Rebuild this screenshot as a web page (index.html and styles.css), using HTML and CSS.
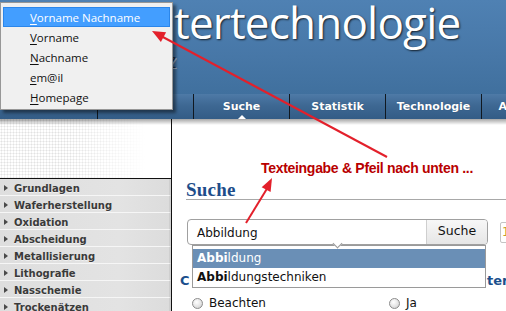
FILE: index.html
```html
<!DOCTYPE html>
<html lang="de">
<head>
<meta charset="utf-8">
<title>Suche</title>
<link rel="stylesheet" href="styles.css">
</head>
<body>
<div class="page">
  <header class="top">
    <h1 class="title">tertechnologie</h1>
    <span class="sub">z</span>
  </header>
  <nav class="nav">
    <div class="cell"></div>
    <div class="cell"></div>
    <div class="cell active">Suche</div>
    <div class="cell">Statistik</div>
    <div class="cell">Technologie</div>
    <div class="cell">Allgemein</div>
  </nav>
  <div class="layout">
    <aside class="side">
      <div class="side-top"></div>
      <ul class="side-menu">
        <li>Grundlagen</li>
        <li>Waferherstellung</li>
        <li>Oxidation</li>
        <li>Abscheidung</li>
        <li>Metallisierung</li>
        <li>Lithografie</li>
        <li>Nasschemie</li>
        <li>Trockenätzen</li>
      </ul>
    </aside>
    <main class="content">
      <h2 class="heading">Suche</h2>
      <div class="search-row">
        <div class="search-box">
          <span class="search-text">Abbildung</span>
          <span class="search-btn">Suche</span>
        </div>
        <div class="page-box">1</div>
      </div>
      <div class="question"><span>C</span><span>ter?</span></div>
      <div class="radios">
        <label class="radio"><span class="dot"></span>Beachten</label>
        <label class="radio"><span class="dot"></span>Ja</label>
      </div>
      <ul class="suggest">
        <li class="sel"><b>Abbi</b>ldung</li>
        <li><b>Abbi</b>ldungstechniken</li>
      </ul>
      <span class="notch"></span>
      <p class="note">Texteingabe &amp; Pfeil nach unten ...</p>
    </main>
  </div>
  <ul class="ctx-menu">
    <li class="hot"><u>V</u>orname Nachname</li>
    <li><u>V</u>orname</li>
    <li><u>N</u>achname</li>
    <li><u>e</u>m@il</li>
    <li><u>H</u>omepage</li>
  </ul>
  <svg class="arrows" width="506" height="311" viewBox="0 0 506 311">
    <line x1="387" y1="157" x2="161" y2="36" stroke="#e3202b" stroke-width="2"/>
    <polygon points="152,31 160.9,42 166.1,32.3" fill="#e3202b"/>
    <line x1="246" y1="223" x2="268" y2="187" stroke="#e3202b" stroke-width="2"/>
    <polygon points="272,178 270.6,191.9 261.7,187.3" fill="#e3202b"/>
  </svg>
</div>
</body>
</html>
```
FILE: styles.css
```css
* { box-sizing: border-box; }
html, body { margin: 0; padding: 0; }
body { width: 506px; height: 311px; overflow: hidden; background: #fff; font-family: "DejaVu Sans", Verdana, sans-serif; }
.page { position: relative; width: 506px; height: 311px; overflow: hidden; }

.top {
  height: 94px;
  background: linear-gradient(to bottom, #4f81b3 0%, #4777a7 60%, #40709e 100%);
  padding-left: 174px;
  position: relative;
}
.title {
  margin: 0;
  font-family: "Open Sans", sans-serif;
  font-weight: 400;
  font-size: 44px;
  line-height: 44px;
  letter-spacing: -0.8px;
  color: #fff;
  text-shadow: 1px 1px 2px rgba(0,0,0,.75);
}
.sub {
  display: block;
  margin-left: -7px;
  margin-top: 6px;
  font-family: "Open Sans", sans-serif;
  font-size: 20px;
  line-height: 22px;
  color: #22344a;
  text-shadow: 1px 1px 0 rgba(255,255,255,.5);
}

.nav {
  height: 25px;
  display: flex;
  padding-left: 2px;
  background: linear-gradient(to bottom, #4e7aa7 0%, #3e6893 45%, #335c86 100%);
}
.cell {
  flex: 0 0 96px;
  border-right: 1px solid #101820;
  color: #fff;
  font-weight: bold;
  font-size: 11px;
  line-height: 25px;
  text-align: center;
  position: relative;
  white-space: nowrap;
  text-shadow: 0 0 1px rgba(0,0,0,.3);
}
.cell.active::after {
  content: "";
  position: absolute;
  left: 50%;
  bottom: 0;
  margin-left: -4px;
  border-left: 4px solid transparent;
  border-right: 4px solid transparent;
  border-bottom: 4px solid #fff;
}

.layout {
  display: flex;
  height: 192px;
  position: relative;
}
.layout::before {
  content: "";
  position: absolute;
  left: 0; right: 0; top: 0;
  height: 6px;
  background: linear-gradient(to bottom, rgba(0,0,0,.35), rgba(0,0,0,0));
  z-index: 2;
}
.side {
  flex: 0 0 172px;
  border-right: 1px solid #111;
  background: #fff;
}
.side-top {
  height: 60px;
  border-bottom: 1px solid #111;
  background:
    linear-gradient(to right, rgba(255,255,255,0) 0%, rgba(255,255,255,0) 40%, #fff 85%),
    radial-gradient(circle, #e2e2e2 0.9px, transparent 1.1px) 0 0 / 3px 3px,
    #fff;
}
.side-menu { list-style: none; margin: 0; padding: 0; }
.side-menu li {
  height: 17px;
  line-height: 15px;
  padding-top: 2px;
  border-bottom: 1px solid #f6f6f6;
  border-right: 2px solid #cfcfcf;
  background: linear-gradient(to right, #dedede 0%, #e3e3e3 70%, #dcdcdc 100%);
  padding-left: 14px;
  font-size: 10px;
  font-weight: bold;
  color: #3a3a3a;
  position: relative;
  white-space: nowrap;
  text-shadow: 0 1px 0 rgba(255,255,255,.5);
}
.side-menu li::before {
  content: "";
  position: absolute;
  left: 4px;
  top: 6px;
  border-left: 4px solid #4a4a4a;
  border-top: 3.5px solid transparent;
  border-bottom: 3.5px solid transparent;
}

.content {
  flex: 1;
  position: relative;
  min-width: 0;
}
.heading {
  margin: 62px 0 0 14px;
  font-family: "Liberation Serif", "Times New Roman", serif;
  font-size: 19px;
  font-weight: bold;
  line-height: 18px;
  color: #1e4d8a;
  border-bottom: 1px solid #a8a8a8;
  letter-spacing: 0.2px;
}
.search-row {
  display: flex;
  margin: 19px 0 0 15px;
  align-items: flex-start;
  gap: 12px;
}
.search-box {
  display: flex;
  flex: 0 0 301px;
  width: 301px;
  height: 26px;
  border: 1px solid #a0a0a0;
  border-radius: 4px;
  overflow: hidden;
  background: #fff;
}
.search-text {
  flex: 1;
  padding-left: 9px;
  font-size: 12px;
  line-height: 26px;
  color: #111;
}
.search-btn {
  width: 61px;
  border-left: 1px solid #cfcfcf;
  background: linear-gradient(to bottom, #f7f7f7, #e6e6e6);
  font-size: 12.5px;
  line-height: 22px;
  text-align: center;
  color: #111;
}
.page-box {
  flex: 0 0 30px;
  height: 21px;
  margin-top: 3px;
  border: 1px solid #c4c4c4;
  border-radius: 2px;
  padding-left: 1px;
  font-size: 12px;
  line-height: 19px;
  color: #c89a2a;
}
.question {
  display: grid;
  grid-template-columns: 307px auto;
  margin: 28px 0 0 8px;
  font-size: 13px;
  font-weight: bold;
  line-height: 16px;
  color: #1b4f8c;
  white-space: nowrap;
}
.radios {
  display: flex;
  margin: 7px 0 0 20px;
  font-size: 12px;
  line-height: 14px;
  color: #111;
}
.radio { display: flex; align-items: center; gap: 6px; flex: 0 0 197px; }
.dot {
  width: 11px; height: 11px;
  border-radius: 50%;
  border: 1px solid #8c8c8c;
  background: radial-gradient(circle at 40% 35%, #fff 0%, #e4e4e4 55%, #c4c4c4 100%);
}

.suggest {
  position: absolute;
  left: 20px;
  top: 126px;
  width: 294px;
  margin: 0;
  padding: 3px 0 0;
  list-style: none;
  border: 1px solid #9a9a9a;
  background: #fff;
  z-index: 3;
}
.suggest li {
  height: 19px;
  line-height: 19px;
  padding-left: 4px;
  font-size: 12px;
  color: #111;
}
.suggest li.sel { background: #6a8fb6; color: #fff; }
.notch {
  position: absolute;
  left: 162px;
  top: 121px;
  width: 7px; height: 7px;
  background: #fff;
  border-right: 1px solid #9a9a9a;
  border-bottom: 1px solid #9a9a9a;
  transform: rotate(45deg);
  z-index: 4;
}
.note {
  position: absolute;
  left: 89px;
  top: 41px;
  margin: 0;
  font-family: "Liberation Sans", Arial, sans-serif;
  font-size: 14px;
  font-weight: bold;
  line-height: 16px;
  letter-spacing: -0.3px;
  color: #b80000;
  white-space: nowrap;
}

.ctx-menu {
  position: absolute;
  left: 0;
  top: 2px;
  width: 173px;
  margin: 0;
  padding: 4px 2px 2px;
  list-style: none;
  background: #f0f0f0;
  border: 1px solid #979797;
  box-shadow: 3px 3px 3px rgba(0,0,0,.45);
  z-index: 10;
  font-family: "Open Sans", sans-serif;
  font-size: 11.5px;
}
.ctx-menu li {
  height: 20px;
  line-height: 19px;
  padding-left: 26px;
  color: #111;
  border: 1px solid transparent;
}
.ctx-menu li.hot {
  background: #439eff;
  border-color: #2b86ea;
  color: #fff;
}
.ctx-menu u { text-underline-offset: 2px; }

.arrows {
  position: absolute;
  left: 0;
  top: 0;
  z-index: 20;
  pointer-events: none;
}
```
